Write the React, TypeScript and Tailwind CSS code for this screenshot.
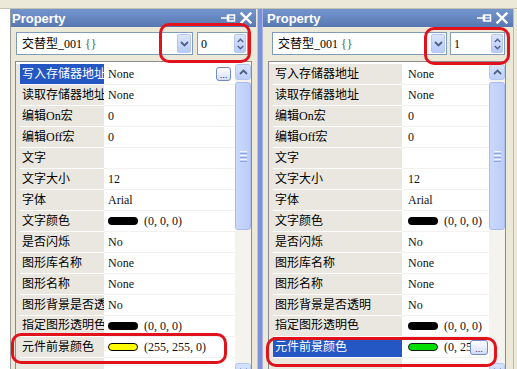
import React from "react";

type Row = { label: string; value?: string; swatch?: string; clip?: boolean };

function makeRows(lastSwatch: string, lastValue: string): Row[] {
  return [
    { label: "写入存储器地址", value: "None" },
    { label: "读取存储器地址", value: "None" },
    { label: "编辑On宏", value: "0" },
    { label: "编辑Off宏", value: "0" },
    { label: "文字" },
    { label: "文字大小", value: "12" },
    { label: "字体", value: "Arial" },
    { label: "文字颜色", swatch: "bg-black", value: "(0, 0, 0)" },
    { label: "是否闪烁", value: "No" },
    { label: "图形库名称", value: "None" },
    { label: "图形名称", value: "None" },
    { label: "图形背景是否透明", value: "No" },
    { label: "指定图形透明色", swatch: "bg-black", value: "(0, 0, 0)", clip: true },
    { label: "元件前景颜色", swatch: lastSwatch, value: lastValue },
    { label: "" },
  ];
}

function Chev({ up, w = 9, h = 6 }: { up?: boolean; w?: number; h?: number }) {
  return (
    <svg width={w} height={h} viewBox="0 0 9 6">
      <polyline
        points={up ? "1,5 4.5,1.5 8,5" : "1,1 4.5,4.5 8,1"}
        fill="none"
        stroke="#4d6185"
        strokeWidth="1.8"
      />
    </svg>
  );
}

function DotsButton({ className }: { className: string }) {
  return (
    <div
      className={
        "shrink-0 rounded-[3px] border border-[#6f8cc8] bg-linear-to-b from-white to-[#d3ddf4] flex items-end justify-center pb-[2px] " +
        className
      }
    >
      <span className="text-[9px] leading-[6px] text-[#1c2c5c] font-['Liberation_Sans',sans-serif]">
        ...
      </span>
    </div>
  );
}

function ArrowBtn({ up }: { up?: boolean }) {
  return (
    <div className="h-[16px] shrink-0 rounded-[3px] border border-[#b3c6f1] bg-linear-to-b from-[#d9e4fd] to-[#bccffa] flex items-center justify-center">
      <Chev up={up} />
    </div>
  );
}

function ScrollBar() {
  return (
    <div className="w-[16px] shrink-0 flex flex-col bg-[#f4f3ee]">
      <ArrowBtn up />
      <div className="h-[2px] shrink-0" />
      <div className="h-[148px] shrink-0 rounded-[3px] border border-[#a9bdea] bg-linear-to-r from-[#c9d8fd] to-[#bccdf8] flex flex-col items-center justify-center gap-[1px]">
        <div className="w-[7px] h-[1px] bg-[#eef3ff]" />
        <div className="w-[7px] h-[1px] bg-[#8fa6dc]" />
        <div className="w-[7px] h-[1px] bg-[#eef3ff]" />
        <div className="w-[7px] h-[1px] bg-[#8fa6dc]" />
        <div className="w-[7px] h-[1px] bg-[#eef3ff]" />
        <div className="w-[7px] h-[1px] bg-[#8fa6dc]" />
      </div>
      <div className="flex-1" />
      <ArrowBtn />
    </div>
  );
}

function PropRow({
  row,
  labelW,
  valuePl,
  selected,
  dots,
}: {
  row: Row;
  labelW: string;
  valuePl: string;
  selected: boolean;
  dots?: React.ReactNode;
}) {
  return (
    <div className="flex h-[21px] shrink-0">
      <div
        className={
          labelW +
          " shrink-0 border-b border-white overflow-hidden whitespace-nowrap pl-[2px] text-[12px] " +
          (selected ? "bg-[#2457c4] text-white" : "bg-[#e9e7df] text-black") +
          (row.clip ? "" : " flex items-center")
        }
      >
        {row.clip ? (
          <div className="h-[11px] mt-[3px] overflow-hidden leading-[13px]">{row.label}</div>
        ) : (
          <span className="leading-[14px]">{row.label}</span>
        )}
      </div>
      <div
        className={
          "flex-1 min-w-0 flex items-center overflow-hidden whitespace-nowrap text-[12px] text-[#111] bg-white border-b border-[#f3f2ee] " +
          valuePl
        }
      >
        {row.swatch && <span className={"shrink-0 w-[30px] h-[8px] rounded-full mr-[6px] " + row.swatch} />}
        <span className="min-w-0 flex-1 overflow-hidden leading-[14px]">{row.value}</span>
        {dots}
      </div>
    </div>
  );
}

function PinIcon() {
  return (
    <svg width="15" height="10" viewBox="0 0 15 10">
      <path d="M0 5H6.5M6.5 1.5V8.5" stroke="white" strokeWidth="1.5" fill="none" />
      <rect x="7.5" y="2" width="6" height="6" fill="none" stroke="white" strokeWidth="1.5" />
      <path d="M7.5 5H13.5" stroke="white" strokeWidth="1" />
    </svg>
  );
}

function CloseIcon() {
  return (
    <svg width="12" height="12" viewBox="0 0 12 12">
      <path d="M1.5 1.5L10.5 10.5M10.5 1.5L1.5 10.5" stroke="white" strokeWidth="2.4" strokeLinecap="square" />
    </svg>
  );
}

function Panel({
  width,
  titlePl,
  titlePr,
  comboRow,
  comboW,
  spinW,
  spinVal,
  gridCls,
  labelW,
  valuePl,
  selected,
  rows,
  dotsRow,
  dotsCls,
}: {
  width: string;
  titlePl: string;
  titlePr: string;
  comboRow: string;
  comboW: string;
  spinW: string;
  spinVal: string;
  gridCls: string;
  labelW: string;
  valuePl: string;
  selected: number;
  rows: Row[];
  dotsRow: number;
  dotsCls: string;
}) {
  return (
    <div className={width + " shrink-0 flex flex-col bg-[#ece9d8]"}>
      <div
        className={
          "h-[18px] shrink-0 bg-linear-to-b from-[#7495cc] to-[#5878b3] flex items-center " + titlePl + " " + titlePr
        }
      >
        <span className="text-white font-bold text-[13px] leading-none font-['Liberation_Sans',sans-serif]">
          Property
        </span>
        <div className="flex-1" />
        <PinIcon />
        <div className="w-[4px]" />
        <CloseIcon />
      </div>
      <div className={"flex shrink-0 mt-[5px] h-[23px] " + comboRow}>
        <div className={comboW + " shrink-0 border border-[#7f9db9] bg-white flex p-[1px]"}>
          <div className="flex-1 flex items-center pl-[4px] text-[12px] whitespace-nowrap">
            <span>交替型_001 </span>
            <span className="text-[#3f6b45]">&nbsp;{"{}"}</span>
          </div>
          <div className="w-[14px] rounded-[2px] border border-[#b6c8f2] bg-linear-to-b from-[#dce6fd] to-[#b7cbf8] flex items-center justify-center">
            <Chev />
          </div>
        </div>
        <div className={spinW + " shrink-0 border border-[#7f9db9] bg-white flex p-[1px]"}>
          <div className="flex-1 flex items-center pl-[2px] text-[12px]">{spinVal}</div>
          <div className="w-[12px] rounded-[2px] border border-[#b6c8f2] bg-linear-to-b from-[#dce6fd] to-[#b7cbf8] flex flex-col items-center justify-center gap-[2px]">
            <Chev up w={7} h={5} />
            <Chev w={7} h={5} />
          </div>
        </div>
      </div>
      <div className={"flex-1 min-h-0 mt-[6px] border border-[#8c8c8c] border-b-0 bg-white flex pt-[2px] " + gridCls}>
        <div className="w-[4px] shrink-0 bg-[#e9e7df]" />
        <div className="flex-1 min-w-0 min-h-0 flex flex-col overflow-hidden">
          {rows.map((r, i) => (
            <PropRow
              key={i}
              row={r}
              labelW={labelW}
              valuePl={valuePl}
              selected={i === selected}
              dots={i === dotsRow ? <DotsButton className={dotsCls} /> : undefined}
            />
          ))}
        </div>
        <ScrollBar />
      </div>
    </div>
  );
}

export default function App() {
  const leftRows = makeRows("bg-[#ffff00] border border-black", "(255, 255, 0)");
  const rightRows = makeRows("bg-[#00e000] border border-[#1a1a1a]", "(0, 255, 0)");
  return (
    <div className="w-[517px] h-[369px] overflow-hidden relative bg-[#ece9d8] flex flex-col font-['Liberation_Serif','Noto_Sans_CJK_SC',serif]">
      <div className="h-[9px] shrink-0 border-b border-[#c5c2b2]" />
      <div className="flex flex-1 min-h-0">
        <div className="w-[11px] shrink-0 bg-white border-r border-[#9b9b9b]" />
        <Panel
          width="w-[245px]"
          titlePl="pl-[1px]"
          titlePr="pr-[4px]"
          comboRow="pl-[5px] gap-[4px]"
          comboW="w-[177px]"
          spinW="w-[51px]"
          spinVal="0"
          gridCls="ml-[4px] w-[237px] flex-none"
          labelW="w-[84px]"
          valuePl="pl-[4px]"
          selected={0}
          rows={leftRows}
          dotsRow={0}
          dotsCls="w-[15px] h-[14px] mr-[4px]"
        />
        <div className="w-[2px] shrink-0 border-r border-[#c9c6b8]" />
        <div className="w-[5px] shrink-0 bg-[#7d90d8] border-r border-[#a6b3e6]" />
        <Panel
          width="w-[250px]"
          titlePl="pl-[4px]"
          titlePr="pr-[5px]"
          comboRow="pl-[9px] gap-[3px]"
          comboW="w-[175px]"
          spinW="w-[55px]"
          spinVal="1"
          gridCls="ml-[5px] w-[238px] flex-none"
          labelW="w-[129px]"
          valuePl="pl-[6px]"
          selected={13}
          rows={rightRows}
          dotsRow={13}
          dotsCls="w-[18px] h-[15px] mr-[1px]"
        />
        <div className="flex-1 border-l border-[#c0bdb0]" />
      </div>

      {/* red annotation boxes */}
      <div className="absolute left-[159px] top-[23px] w-[92px] h-[40px] border-[3px] border-[#e2121c] rounded-[10px] pointer-events-none" />
      <div className="absolute left-[11px] top-[333px] w-[216px] h-[31px] border-[3px] border-[#e2121c] rounded-[10px] pointer-events-none" />
      <div className="absolute left-[424px] top-[27px] w-[86px] h-[38px] border-[3px] border-[#e2121c] rounded-[10px] pointer-events-none" />
      <div className="absolute left-[266px] top-[337px] w-[231px] h-[30px] border-[3px] border-[#e2121c] rounded-[10px] pointer-events-none" />
    </div>
  );
}
